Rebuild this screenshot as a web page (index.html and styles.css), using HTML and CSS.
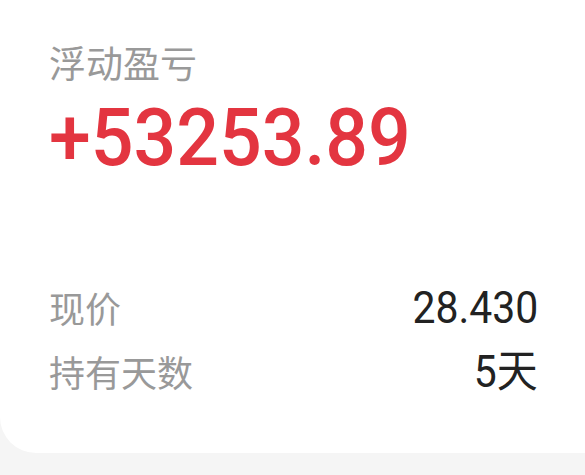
FILE: index.html
```html
<!DOCTYPE html>
<html lang="zh-CN">
<head>
  <meta charset="UTF-8">
  <title>浮动盈亏</title>
  <link rel="stylesheet" href="styles.css">
</head>
<body>
  <div class="card">
    <div class="title">浮动盈亏</div>
    <div class="amount"><span class="num">+53253.89</span></div>
    <div class="stats">
      <div class="row">
        <span class="label">现价</span><span class="value">28.430</span>
      </div>
      <div class="row">
        <span class="label">持有天数</span><span class="value">5天</span>
      </div>
    </div>
  </div>
</body>
</html>
```
FILE: styles.css
```css
body {
  margin: 0;
  background-color: #f5f5f5;
  font-family: Roboto, "Noto Sans CJK SC", sans-serif;
}

.card {
  box-sizing: border-box;
  height: 453px;
  padding: 44px 47px 0 49px;
  background-color: #fff;
  border-radius: 0 0 0 36px;
}

.title {
  font-family: "Noto Sans CJK SC", sans-serif;
  font-size: 37px;
  line-height: 1;
  color: #999;
}

.amount {
  margin-top: 17px;
  font-size: 80px;
  font-weight: 500;
  line-height: 1;
  color: #e33540;
}

/* narrower digits, closer to the DIN-like face of the app */
.num {
  display: inline-block;
  transform: scaleX(0.94);
  transform-origin: left center;
}

.stats {
  margin-top: 98px;
}

.row {
  display: flex;
  justify-content: space-between;
  align-items: baseline;
  line-height: 63px;
}

.label {
  font-family: "Noto Sans CJK SC", sans-serif;
  font-size: 36px;
  color: #999;
}

.value {
  display: inline-block;
  font-size: 44px;
  color: #222;
  transform: scaleX(0.93);
  transform-origin: right center;
}
```
